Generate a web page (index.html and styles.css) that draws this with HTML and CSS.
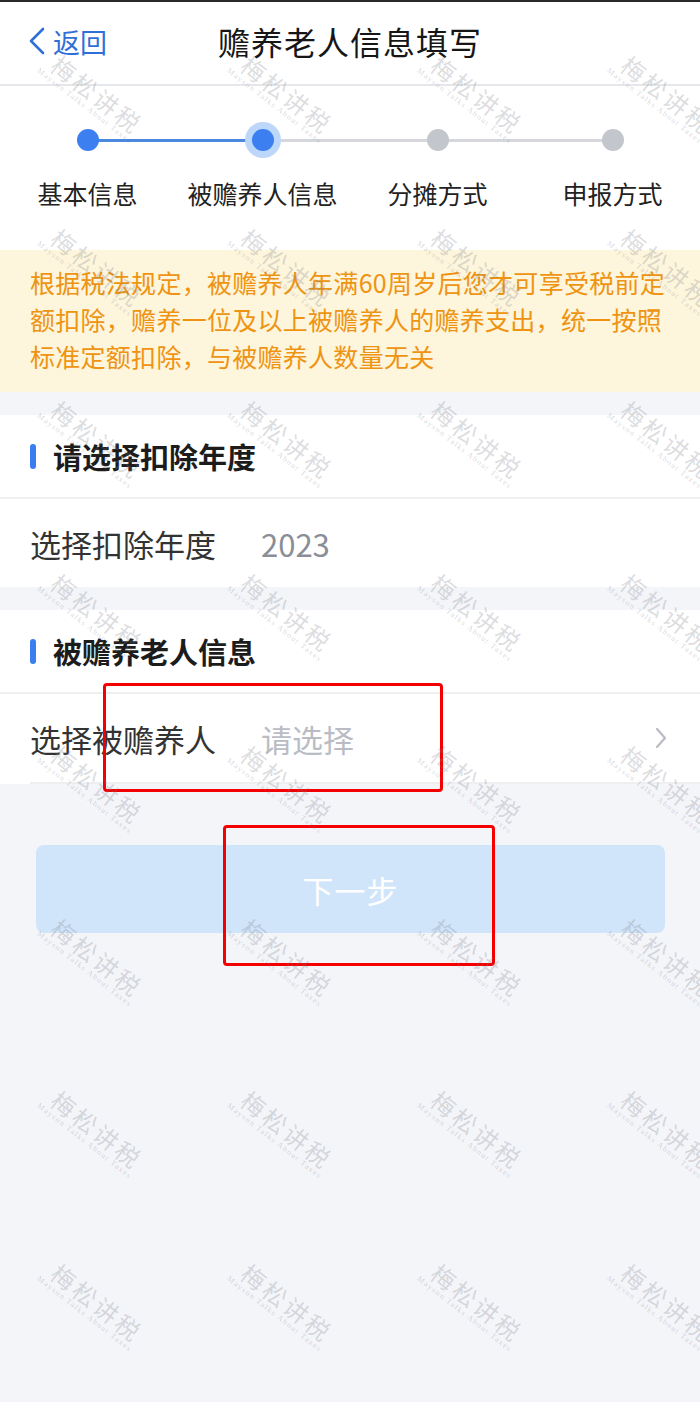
FILE: index.html
```html
<!DOCTYPE html>
<html lang="zh-CN">
<head>
<meta charset="utf-8">
<title>赡养老人信息填写</title>
<link rel="stylesheet" href="styles.css">
</head>
<body>
<div class="screen">
  <div class="topline"></div>
  <header class="nav">
    <a class="back">
      <svg class="back-icon" width="18" height="28" viewBox="0 0 18 28"><polyline points="15,2 3,14 15,26" fill="none" stroke="#2f6fd8" stroke-width="2.6" stroke-linecap="round" stroke-linejoin="round"/></svg>
      <span>返回</span>
    </a>
    <h1 class="title">赡养老人信息填写</h1>
    <span class="nav-spacer"></span>
  </header>

  <section class="steps">
    <div class="step done"><span class="dot"></span><span class="step-label">基本信息</span></div>
    <div class="step current"><span class="dot"></span><span class="step-label">被赡养人信息</span></div>
    <div class="step"><span class="dot"></span><span class="step-label">分摊方式</span></div>
    <div class="step last"><span class="dot"></span><span class="step-label">申报方式</span></div>
  </section>

  <p class="notice">根据税法规定，被赡养人年满60周岁后您才可享受税前定额扣除，赡养一位及以上被赡养人的赡养支出，统一按照标准定额扣除，与被赡养人数量无关</p>

  <section class="card">
    <div class="card-head"><span class="bar"></span><h2 class="card-title">请选择扣除年度</h2></div>
    <div class="field"><span class="field-label">选择扣除年度</span><span class="field-value">2023</span></div>
  </section>

  <section class="card">
    <div class="card-head"><span class="bar"></span><h2 class="card-title">被赡养老人信息</h2></div>
    <div class="field field-last">
      <span class="field-label">选择被赡养人</span>
      <span class="field-placeholder">请选择</span>
      <svg class="chevron" width="14" height="24" viewBox="0 0 14 24"><polyline points="3,3 11,12 3,21" fill="none" stroke="#b9bcc3" stroke-width="2.2" stroke-linecap="round" stroke-linejoin="round"/></svg>
    </div>
  </section>

  <div class="actions"><button class="next" type="button">下一步</button></div>

  <div class="annot annot-1"></div>
  <div class="annot annot-2"></div>

  <div class="watermarks">
    <div class="wm"><span class="wm-cn">梅松讲税</span><span class="wm-en">Mayson Talks About Taxes</span></div>
    <div class="wm"><span class="wm-cn">梅松讲税</span><span class="wm-en">Mayson Talks About Taxes</span></div>
    <div class="wm"><span class="wm-cn">梅松讲税</span><span class="wm-en">Mayson Talks About Taxes</span></div>
    <div class="wm"><span class="wm-cn">梅松讲税</span><span class="wm-en">Mayson Talks About Taxes</span></div>
    <div class="wm"><span class="wm-cn">梅松讲税</span><span class="wm-en">Mayson Talks About Taxes</span></div>
    <div class="wm"><span class="wm-cn">梅松讲税</span><span class="wm-en">Mayson Talks About Taxes</span></div>
    <div class="wm"><span class="wm-cn">梅松讲税</span><span class="wm-en">Mayson Talks About Taxes</span></div>
    <div class="wm"><span class="wm-cn">梅松讲税</span><span class="wm-en">Mayson Talks About Taxes</span></div>
    <div class="wm"><span class="wm-cn">梅松讲税</span><span class="wm-en">Mayson Talks About Taxes</span></div>
    <div class="wm"><span class="wm-cn">梅松讲税</span><span class="wm-en">Mayson Talks About Taxes</span></div>
    <div class="wm"><span class="wm-cn">梅松讲税</span><span class="wm-en">Mayson Talks About Taxes</span></div>
    <div class="wm"><span class="wm-cn">梅松讲税</span><span class="wm-en">Mayson Talks About Taxes</span></div>
    <div class="wm"><span class="wm-cn">梅松讲税</span><span class="wm-en">Mayson Talks About Taxes</span></div>
    <div class="wm"><span class="wm-cn">梅松讲税</span><span class="wm-en">Mayson Talks About Taxes</span></div>
    <div class="wm"><span class="wm-cn">梅松讲税</span><span class="wm-en">Mayson Talks About Taxes</span></div>
    <div class="wm"><span class="wm-cn">梅松讲税</span><span class="wm-en">Mayson Talks About Taxes</span></div>
    <div class="wm"><span class="wm-cn">梅松讲税</span><span class="wm-en">Mayson Talks About Taxes</span></div>
    <div class="wm"><span class="wm-cn">梅松讲税</span><span class="wm-en">Mayson Talks About Taxes</span></div>
    <div class="wm"><span class="wm-cn">梅松讲税</span><span class="wm-en">Mayson Talks About Taxes</span></div>
    <div class="wm"><span class="wm-cn">梅松讲税</span><span class="wm-en">Mayson Talks About Taxes</span></div>
    <div class="wm"><span class="wm-cn">梅松讲税</span><span class="wm-en">Mayson Talks About Taxes</span></div>
    <div class="wm"><span class="wm-cn">梅松讲税</span><span class="wm-en">Mayson Talks About Taxes</span></div>
    <div class="wm"><span class="wm-cn">梅松讲税</span><span class="wm-en">Mayson Talks About Taxes</span></div>
    <div class="wm"><span class="wm-cn">梅松讲税</span><span class="wm-en">Mayson Talks About Taxes</span></div>
    <div class="wm"><span class="wm-cn">梅松讲税</span><span class="wm-en">Mayson Talks About Taxes</span></div>
    <div class="wm"><span class="wm-cn">梅松讲税</span><span class="wm-en">Mayson Talks About Taxes</span></div>
    <div class="wm"><span class="wm-cn">梅松讲税</span><span class="wm-en">Mayson Talks About Taxes</span></div>
    <div class="wm"><span class="wm-cn">梅松讲税</span><span class="wm-en">Mayson Talks About Taxes</span></div>
    <div class="wm"><span class="wm-cn">梅松讲税</span><span class="wm-en">Mayson Talks About Taxes</span></div>
    <div class="wm"><span class="wm-cn">梅松讲税</span><span class="wm-en">Mayson Talks About Taxes</span></div>
    <div class="wm"><span class="wm-cn">梅松讲税</span><span class="wm-en">Mayson Talks About Taxes</span></div>
    <div class="wm"><span class="wm-cn">梅松讲税</span><span class="wm-en">Mayson Talks About Taxes</span></div>
  </div>
</div>
</body>
</html>
```

FILE: styles.css
```css
* { box-sizing: border-box; }
html, body { margin: 0; padding: 0; }
body {
  font-family: "Noto Sans CJK SC", "Noto Sans", sans-serif;
  background: #f4f5f9;
}
.screen {
  position: relative;
  width: 700px;
  height: 1402px;
  overflow: hidden;
  background: #f4f5f9;
}
.topline { height: 2px; background: #2a2a2a; }

.nav {
  height: 84px;
  background: #fff;
  border-bottom: 2px solid #e6e7ea;
  display: grid;
  grid-template-columns: 1fr auto 1fr;
  align-items: center;
  padding: 0 28px 4px 28px;
}
.back {
  display: flex;
  align-items: center;
  gap: 7px;
  color: #2f6fd8;
  font-size: 27px;
  line-height: 1;
}
.back-icon { display: block; }
.title {
  margin: 0;
  font-size: 32px;
  font-weight: 400;
  color: #161616;
  line-height: 1;
  letter-spacing: 1px;
}

.steps {
  background: #fff;
  display: grid;
  grid-template-columns: repeat(4, 1fr);
  padding: 43px 0 40px;
}
.step {
  position: relative;
  display: flex;
  flex-direction: column;
  align-items: center;
}
.step::after {
  content: "";
  position: absolute;
  top: 10px;
  left: 50%;
  width: 100%;
  height: 3px;
  background: #d5d7dc;
}
.step.done::after { background: #4d88e0; }
.step.last::after { display: none; }
.dot {
  position: relative;
  z-index: 1;
  width: 22px;
  height: 22px;
  border-radius: 50%;
  background: #c4c6cd;
}
.step.done .dot, .step.current .dot { background: #3b7ff0; }
.step.current .dot { box-shadow: 0 0 0 7px #bcd7f9; }
.step-label {
  margin-top: 25px;
  font-size: 25px;
  line-height: 34px;
  color: #222;
}

.notice {
  margin: 0;
  background: #fdf5dc;
  color: #ee9412;
  font-size: 25px;
  line-height: 37px;
  letter-spacing: 0.28px;
  padding: 14px 30px 17px 30px;
}

.card {
  background: #fff;
  margin-top: 23px;
}
.card-head {
  height: 84px;
  display: flex;
  align-items: center;
  padding-left: 30px;
  gap: 17px;
  border-bottom: 2px solid #efeff2;
}
.bar {
  width: 6px;
  height: 25px;
  border-radius: 3px;
  background: #3a7ef0;
}
.card-title {
  margin: 0;
  font-size: 29px;
  font-weight: 700;
  color: #1c1c1c;
  line-height: 1;
}
.field {
  height: 88px;
  display: flex;
  align-items: center;
  padding: 0 32px 0 30px;
  font-size: 31px;
  line-height: 1;
}
.field-last {
  height: 90px;
  border-bottom: 2px solid #efeff2;
  margin-left: 30px;
  padding-left: 0;
}
.field-label {
  width: 231px;
  color: #333;
}
.field-value { color: #8a8e97; }
.field-placeholder { color: #b9bcc4; flex: 1; }
.chevron { display: block; }

.actions {
  padding: 61px 35px 0 36px;
}
.next {
  display: block;
  width: 100%;
  height: 88px;
  border: 0;
  border-radius: 8px;
  background: #d1e5fa;
  color: #fff;
  font-family: "Noto Sans CJK SC", "Noto Sans", sans-serif;
  font-size: 31px;
  letter-spacing: 1px;
}

.annot {
  position: absolute;
  border: 3px solid #f40000;
  border-radius: 4px;
}
.annot-1 { left: 103px; top: 683px; width: 340px; height: 109px; }
.annot-2 { left: 223px; top: 825px; width: 272px; height: 141px; }

.watermarks {
  position: absolute;
  top: 0;
  left: 0;
  width: 700px;
  height: 1402px;
  display: grid;
  grid-template-columns: repeat(4, 190px);
  grid-auto-rows: 172.5px;
  padding: 52px 0 0 62px;
  pointer-events: none;
}
.wm {
  display: flex;
  flex-direction: column;
  width: max-content;
  height: max-content;
  transform: rotate(38deg);
  transform-origin: 0 0;
}
.wm-cn {
  font-size: 24px;
  line-height: 1;
  letter-spacing: 3px;
  color: rgba(120, 122, 132, 0.26);
}
.wm-en {
  font-family: "Liberation Serif", serif;
  font-size: 8px;
  line-height: 1;
  letter-spacing: 1.3px;
  margin-top: 1px;
  margin-left: -8px;
  color: rgba(120, 122, 132, 0.3);
}
```
